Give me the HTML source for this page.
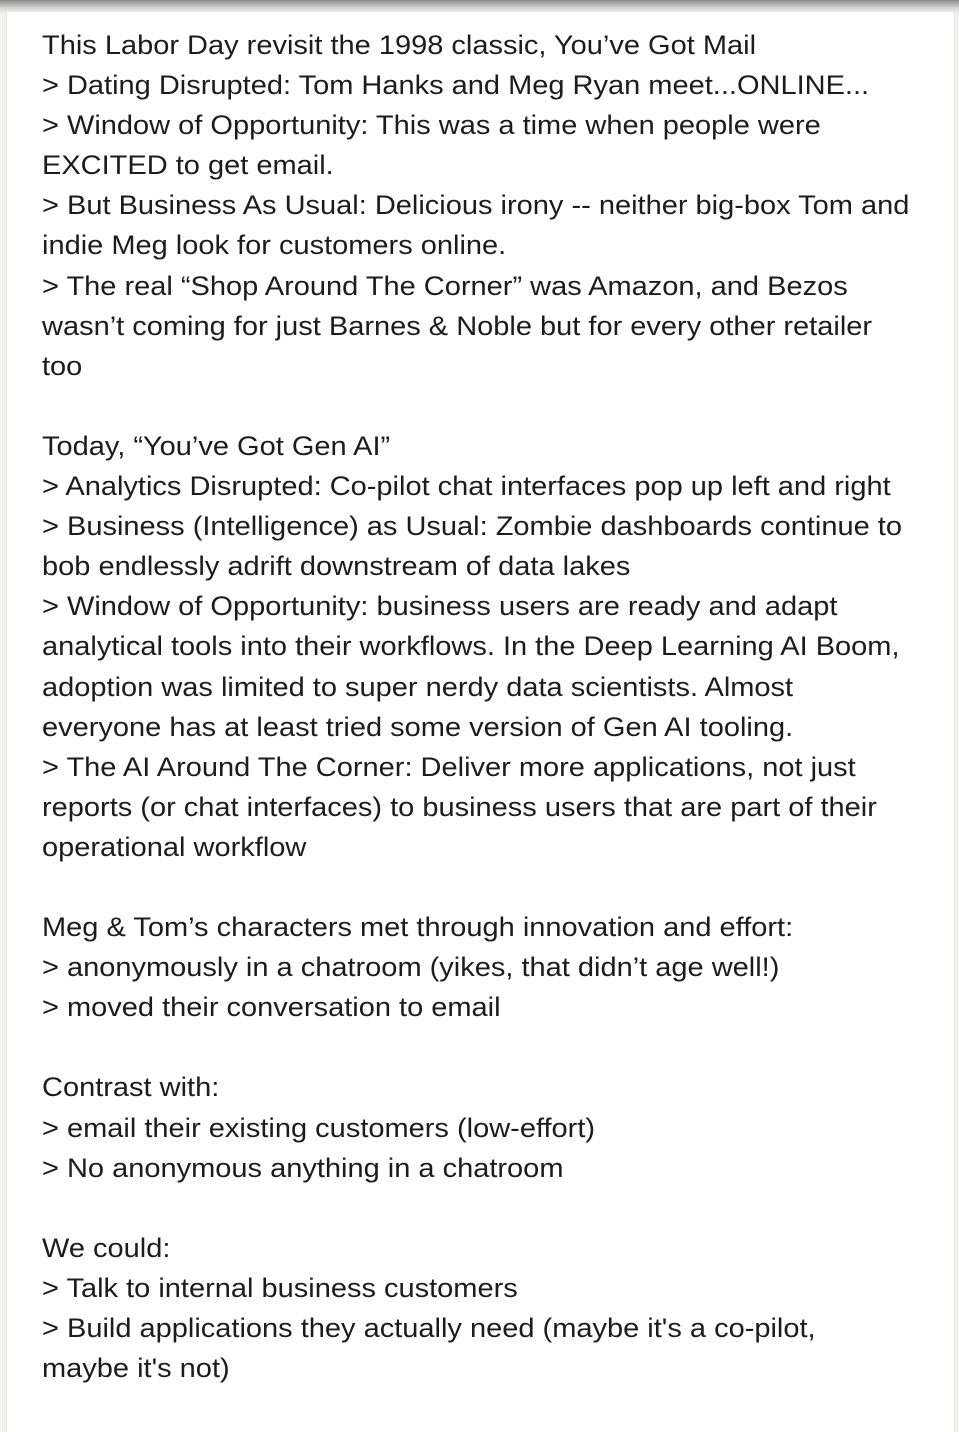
<!DOCTYPE html>
<html><head><meta charset="utf-8"><style>
html,body{margin:0;padding:0;background:#f2f1ee;}
body{width:959px;height:1427px;overflow:hidden;position:relative;font-family:"Liberation Sans",Arial,sans-serif;}
.top{position:absolute;left:0;top:0;width:959px;height:14px;background:linear-gradient(#8a8a8a,#d8d8d8 60%,#f2f1ee);}
.card{position:absolute;left:6px;top:12px;width:947px;height:1420px;background:#fff;border-left:1px solid #e4e3df;border-right:1px solid #e4e3df;}
.t{position:absolute;left:42px;top:25px;font-size:27px;line-height:40.1px;color:#1c1c1c;white-space:pre;transform:scaleX(1.074);transform-origin:0 0;}
</style></head><body>
<div class="top"></div>
<div class="card"></div>
<div class="t">This Labor Day revisit the 1998 classic, You’ve Got Mail
&gt; Dating Disrupted: Tom Hanks and Meg Ryan meet...ONLINE...
&gt; Window of Opportunity: This was a time when people were
EXCITED to get email.
&gt; But Business As Usual: Delicious irony -- neither big-box Tom and
indie Meg look for customers online.
&gt; The real “Shop Around The Corner” was Amazon, and Bezos
wasn’t coming for just Barnes &amp; Noble but for every other retailer
too

Today, “You’ve Got Gen AI”
&gt; Analytics Disrupted: Co-pilot chat interfaces pop up left and right
&gt; Business (Intelligence) as Usual: Zombie dashboards continue to
bob endlessly adrift downstream of data lakes
&gt; Window of Opportunity: business users are ready and adapt
analytical tools into their workflows. In the Deep Learning AI Boom,
adoption was limited to super nerdy data scientists. Almost
everyone has at least tried some version of Gen AI tooling.
&gt; The AI Around The Corner: Deliver more applications, not just
reports (or chat interfaces) to business users that are part of their
operational workflow

Meg &amp; Tom’s characters met through innovation and effort:
&gt; anonymously in a chatroom (yikes, that didn’t age well!)
&gt; moved their conversation to email

Contrast with:
&gt; email their existing customers (low-effort)
&gt; No anonymous anything in a chatroom

We could:
&gt; Talk to internal business customers
&gt; Build applications they actually need (maybe it's a co-pilot,
maybe it's not)</div>
</body></html>
